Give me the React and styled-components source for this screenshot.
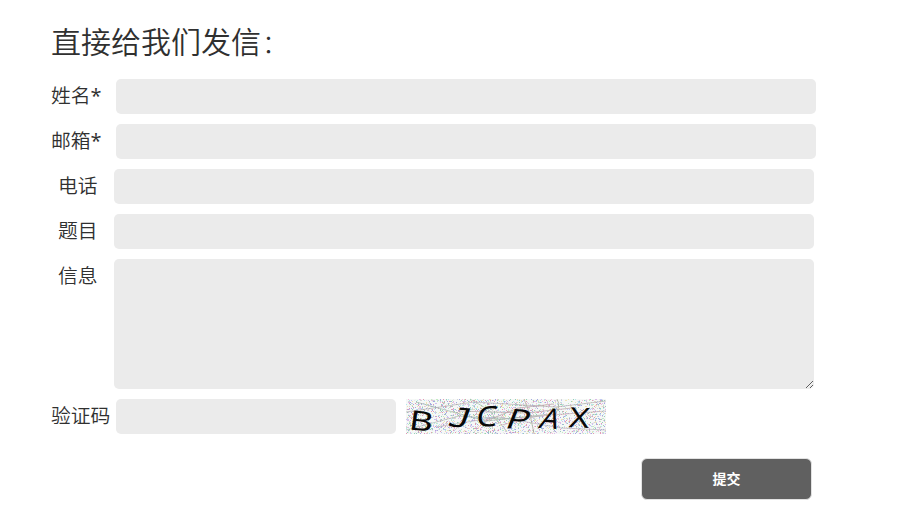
import React from "react";
import styled, { createGlobalStyle } from "styled-components";

const GlobalStyle = createGlobalStyle`
  * { box-sizing: border-box; }
  body {
    margin: 0;
    background: #fff;
    color: #303030;
    font-family: "Noto Sans CJK SC", sans-serif;
    font-weight: 350;
  }
`;

const Form = styled.form`
  display: flex;
  flex-direction: column;
  gap: 10px;
  width: 902px;
  padding: 18px 86px 0 51px;
`;

const Title = styled.h2`
  margin: 0 0 6px;
  height: 45px;
  font-size: 30px;
  line-height: 45px;
  font-weight: 350;
`;

const Colon = styled.span`
  margin-left: 1px;
  font-size: 26px;
  font-weight: 300;
`;

const Row = styled.div`
  display: flex;
  align-items: flex-start;
`;

const Label = styled.label`
  flex: none;
  width: ${(p) => (p.$optional ? 63 : 65)}px;
  height: 34px;
  padding-left: ${(p) => (p.$optional ? 7 : 0)}px;
  font-size: 19.8px;
  line-height: 32px;
  white-space: nowrap;
`;

const Required = styled.span`
  font-family: "Open Sans", sans-serif;
  font-size: 20px;
  line-height: 20px;
  font-weight: 400;
`;

const Input = styled.input`
  width: ${(p) => p.$width || 700}px;
  height: 35px;
  padding: 0 10px;
  border: 0;
  border-radius: 5px;
  background: #ebebeb;
  font: inherit;
  outline: none;
`;

const Message = styled.textarea`
  display: block;
  width: 700px;
  height: 130px;
  padding: 10px;
  border: 0;
  border-radius: 5px;
  background: #ebebeb;
  font: inherit;
  outline: none;
  resize: both;
`;

const CaptchaImage = styled.svg`
  display: block;
  width: 200px;
  height: 35px;
  margin-left: 10px;
  overflow: visible;
`;

const CaptchaLetter = styled.text`
  font-family: ${(p) => (p.$mono ? '"DejaVu Sans Mono", monospace' : '"Noto Sans", sans-serif')};
  font-size: 28px;
  font-weight: 400;
  fill: #090909;
  text-anchor: middle;
`;

const Actions = styled.div`
  display: flex;
  justify-content: flex-end;
  padding: 14px 4px 0 0;
`;

const Submit = styled.button`
  width: 171px;
  height: 42px;
  padding: 0 0 2px;
  border: 1px solid #e2e2e2;
  border-radius: 6px;
  background: #606060;
  color: #fff;
  font-family: "Noto Sans CJK SC", sans-serif;
  font-size: 14px;
  font-weight: 700;
`;

const SPECKLE_COLORS = [
  "#f2bddc", "#c2ecc2", "#bdc8f4", "#efe2b4", "#b4e8ec", "#dabce9",
  "#e29ab4", "#98cfb8", "#a4aae0", "#d4d4d4", "#e8e8e8", "#eef8f2",
];

function makeSpeckles() {
  let seed = 4217;
  const random = () => {
    seed = (seed * 16807) % 2147483647;
    return seed / 2147483647;
  };
  const paths = SPECKLE_COLORS.map(() => "");
  for (let i = 0; i < 3200; i += 1) {
    const x = Math.floor(random() * 200);
    const y = Math.floor(random() * 35);
    paths[Math.floor(random() * paths.length)] += `M${x} ${y}h1v1h-1z`;
  }
  return paths;
}

const speckles = makeSpeckles();

const SCRATCHES = [
  ["M0 13L68 3L150 8L200 2", "#b5afb0"],
  ["M10 3L80 22L145 15", "#9fb5aa"],
  ["M30 28L92 18L155 29L200 31", "#b9b2bf"],
  ["M52 12L120 14L166 9", "#b59fa4"],
  ["M64 0L83 11L101 33", "#aac3ad"],
  ["M75 24L112 9L148 5", "#b59da5"],
  ["M118 0L124 15L128 35", "#a9a292"],
  ["M143 24Q157 8 151 0", "#a7a292"],
  ["M0 31L53 17L94 20L137 17", "#aab8b1"],
  ["M96 26L132 17L200 12", "#c5adb4"],
];

const LETTERS = [
  { char: "B", transform: "translate(14 31.5) rotate(6) skewX(-2) scale(1.32 .97)" },
  { char: "J", transform: "translate(51.5 28) rotate(6) skewX(-14) scale(1.3 .96)", mono: true },
  { char: "C", transform: "translate(80 27.5) rotate(-2) skewX(-8) scale(1.2 1)" },
  { char: "P", transform: "translate(109 30) rotate(5) skewX(-16) scale(1.34 1)" },
  { char: "A", transform: "translate(141 29.5) rotate(4) skewX(-16) scale(1.04 1.01)" },
  { char: "X", transform: "translate(172.5 28.5) rotate(2) skewX(-4) scale(1.24 1)" },
];

function Captcha() {
  return (
    <CaptchaImage viewBox="0 0 200 35">
      <rect width="200" height="35" fill="#f6f8f7" />
      {speckles.map((d, i) => (
        <path key={SPECKLE_COLORS[i]} d={d} fill={SPECKLE_COLORS[i]} />
      ))}
      {SCRATCHES.map(([d, color]) => (
        <path key={d} d={d} fill="none" stroke={color} strokeWidth="0.7" />
      ))}
      {LETTERS.map(({ char, transform, mono }) => (
        <CaptchaLetter key={char} transform={transform} $mono={mono}>{char}</CaptchaLetter>
      ))}
    </CaptchaImage>
  );
}

const FIELDS = [
  { id: "name", label: "姓名" },
  { id: "email", label: "邮箱" },
  { id: "phone", label: "电话", optional: true },
  { id: "subject", label: "题目", optional: true },
];

export default function App() {
  return (
    <>
      <GlobalStyle />
      <Form onSubmit={(event) => event.preventDefault()}>
        <Title>直接给我们发信<Colon>：</Colon></Title>
        {FIELDS.map(({ id, label, optional }) => (
          <Row key={id}>
            <Label htmlFor={id} $optional={optional}>
              {label}
              {!optional && <Required>*</Required>}
            </Label>
            <Input id={id} />
          </Row>
        ))}
        <Row>
          <Label htmlFor="message" $optional>信息</Label>
          <Message id="message" />
        </Row>
        <Row>
          <Label htmlFor="code">验证码</Label>
          <Input id="code" $width={280} />
          <Captcha />
        </Row>
        <Actions>
          <Submit type="submit">提交</Submit>
        </Actions>
      </Form>
    </>
  );
}
